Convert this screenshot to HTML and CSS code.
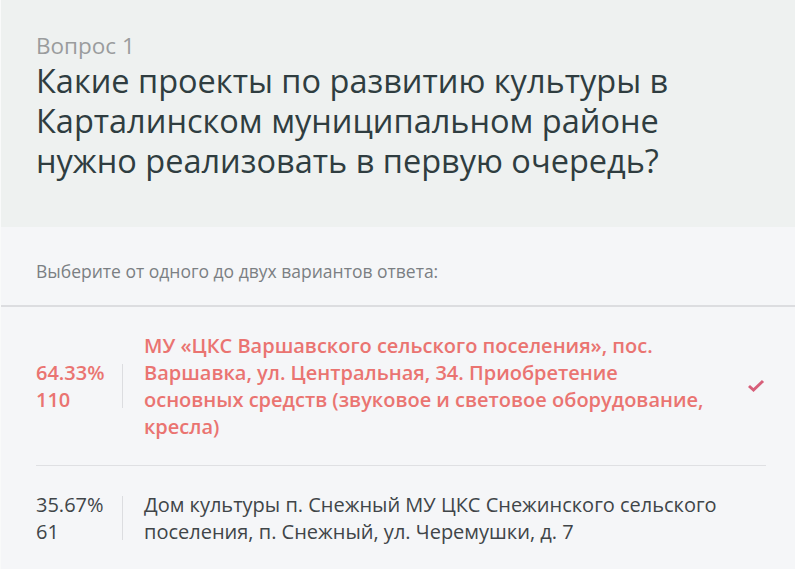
FILE: index.html
```html
<!DOCTYPE html>
<html lang="ru">
<head>
  <meta charset="UTF-8" />
  <title>Вопрос 1</title>
  <link rel="stylesheet" href="styles.css">
</head>
<body>

<div class="question">
  <div class="question-head">
    <div class="question-num">Вопрос 1</div>
    <h1 class="question-title">Какие проекты по развитию культуры в Карталинском муниципальном районе нужно реализовать в первую очередь?</h1>
  </div>

  <div class="question-hint">Выберите от одного до двух вариантов ответа:</div>

  <ul class="answers">
    <li class="answer chosen">
      <div class="answer-stat">64.33%<br>110</div>
      <span class="answer-sep"></span>
      <div class="answer-text">МУ «ЦКС Варшавского сельского поселения», пос. Варшавка, ул. Центральная, 34. Приобретение основных средств (звуковое и световое оборудование, кресла)</div>
      <svg class="answer-check" width="18" height="14" viewBox="0 0 18 14">
        <path d="M2 7 L6.5 11 L16 2" fill="none" stroke="currentColor" stroke-width="3" />
      </svg>
    </li>
    <li class="answer">
      <div class="answer-stat">35.67%<br>61</div>
      <span class="answer-sep"></span>
      <div class="answer-text">Дом культуры п. Снежный МУ ЦКС Снежинского сельского поселения, п. Снежный, ул. Черемушки, д. 7</div>
    </li>
  </ul>
</div>

</body>
</html>
```

FILE: styles.css
```css
body {
  margin: 0;
  font-family: "Open Sans", Arial, sans-serif;
  background: #f5f6f8;
}

.question {
  border-left: 1px solid #f9fafa;
}

.question-head {
  background: #eef1f0;
  padding: 31px 36px 46px 35px;
}

.question-num {
  font-size: 22.5px;
  line-height: 30px;
  color: #9a9c9d;
}

.question-title {
  margin: 0;
  font-weight: normal;
  font-size: 32.5px;
  line-height: 40px;
  color: #2f3d40;
}

.question-hint {
  padding: 32px 36px 22px 35px;
  font-size: 17.5px;
  line-height: 24px;
  color: #7b7f83;
  border-bottom: 2px solid #dcdde0;
}

.answers {
  list-style: none;
  margin: 0;
  padding: 0 29px 0 35px;
}

.answer {
  display: flex;
  align-items: center;
  padding: 25px 0;
  border-bottom: 1px solid #dfe0e3;
  font-size: 20px;
  line-height: 27px;
  color: #404548;
}

.answer:last-child {
  border-bottom: none;
}

.answer-stat {
  width: 86px;
  flex-shrink: 0;
}

.answer-sep {
  width: 1px;
  height: 44px;
  flex-shrink: 0;
  background: #dcdde0;
}

.answer-text {
  flex: 1;
  padding-left: 21px;
  padding-right: 30px;
}

.chosen {
  color: #ea7471;
  font-weight: 600;
}

.answer-check {
  color: #d75f7a;
  flex-shrink: 0;
  margin-right: 1px;
}
```
